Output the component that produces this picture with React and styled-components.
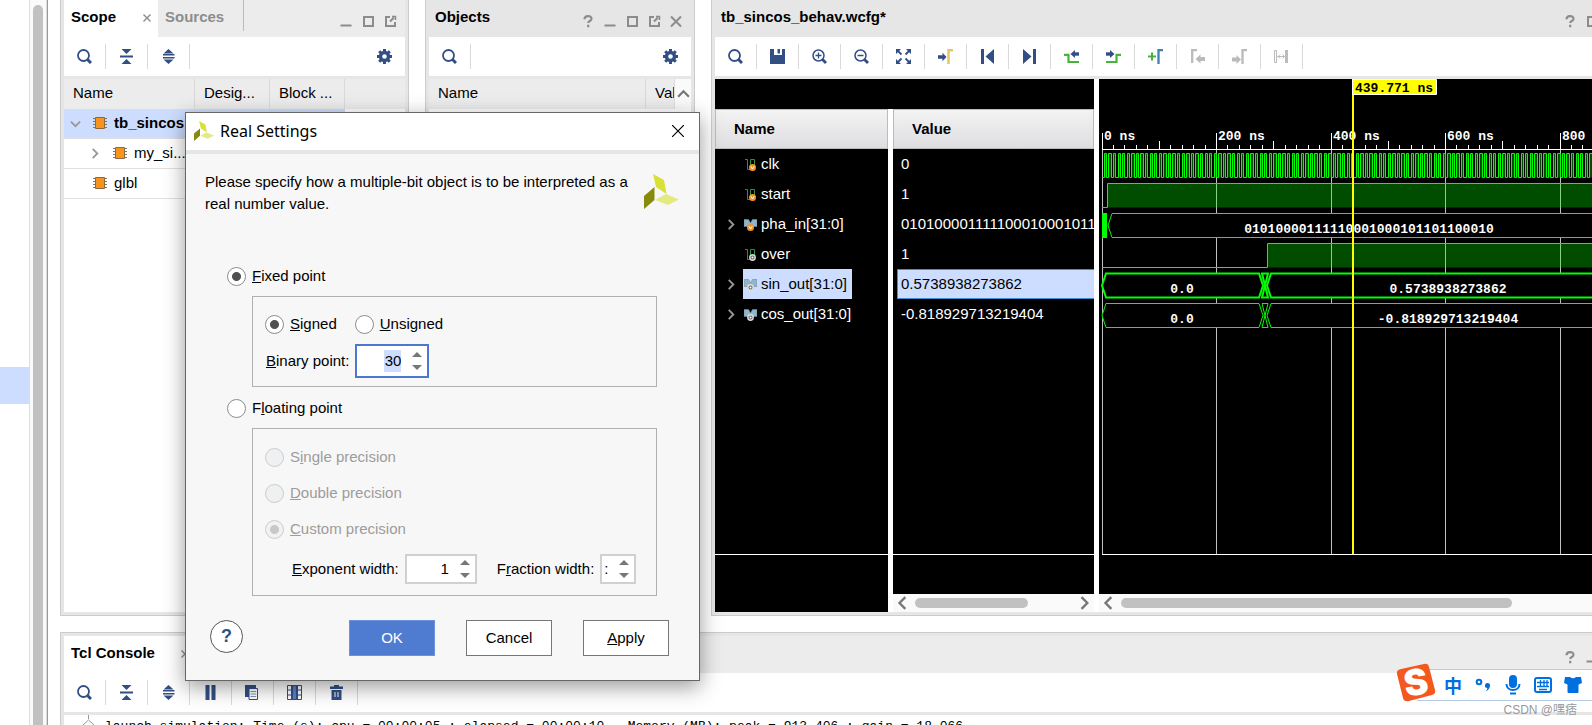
import React from "react";
import styled, { createGlobalStyle, css } from "styled-components";

const navy = "#324f85";
const grey = "#8c8c8c";
const selection = "#ccddff";
const frame = "#e6e6e6";

const GlobalStyle = createGlobalStyle`
  * { box-sizing: border-box; }
  body {
    margin: 0;
    overflow: hidden;
    background: #fff;
    color: #000;
    font: 15px/22px "Liberation Sans", Arial, sans-serif;
  }
  button, input { font: inherit; color: inherit; margin: 0; }
  button { padding: 0; border: 0; background: none; }
  svg { display: block; }
`;

/* ---------- page frame ---------- */

const Page = styled.div`
  position: relative;
  display: flex;
  height: 100vh;
  overflow: hidden;
`;

const SideStrip = styled.aside`
  flex: none;
  display: flex;
  width: 48px;
  border-right: 1px solid #999;
`;

const SideList = styled.div`
  flex: 1;
  padding-top: 367px;
`;

const SideSelected = styled.div`
  height: 37px;
  background: ${selection};
`;

const SideTrack = styled.div`
  width: 18px;
  padding: 5px 3px 0;
  border: solid #ddd;
  border-width: 0 1px;
  background: #fafafa;
`;

const SideThumb = styled.div`
  height: 100%;
  border-radius: 5px 5px 0 0;
  background: #c1c1c1;
`;

/* The window is wider than the screen, so its right edge runs off it. */
const Workspace = styled.main`
  flex: 1;
  min-width: 0;
  display: flex;
  flex-direction: column;
  gap: 16px;
  margin: 0 -63px 0 12px;
`;

const TopRow = styled.div`
  flex: 1;
  min-height: 0;
  display: flex;
  gap: 16px;
`;

const Panel = styled.section`
  display: flex;
  flex-direction: column;
  flex: ${(p) => (p.$width ? `0 0 ${p.$width}px` : "1")};
  min-width: 0;
  border: 1px solid #ccc;
  border-top: 0;
  padding: 0 3px 3px;
  background: ${frame};
`;

const ConsolePanel = styled(Panel)`
  flex: none;
  height: 93px;
  padding: 3px 3px 0;
  border-top: 1px solid #ccc;
  border-bottom: 0;
  overflow: hidden;
`;

const PanelHeader = styled.header`
  flex: none;
  display: flex;
  height: 37px;
  background: ${(p) => (p.$tabbed ? "#ececec" : frame)};
`;

const Tab = styled.div`
  display: flex;
  align-items: center;
  gap: 4px;
  height: ${(p) => (p.$active ? "37px" : "31px")};
  padding: ${(p) => (p.$active ? "0 6px 3px 7px" : "3px 0 0 7px")};
  width: ${(p) => p.$width}px;
  justify-content: space-between;
  font-weight: bold;
  color: ${(p) => (p.$active ? "#000" : grey)};
  background: ${(p) => (p.$active ? "#fff" : "transparent")};
  border-right: ${(p) => (p.$active ? "0" : "1px solid #bbb")};
`;

const PanelTitle = styled.h2`
  margin: 0;
  padding: 6px 0 0 6px;
  font-size: 15px;
  line-height: 22px;
`;

const HeaderActions = styled.div`
  display: flex;
  gap: 6px;
  margin-left: auto;
  padding: 13px 7px 0 0;
  button { width: 16px; height: 16px; }
`;

const Toolbar = styled.div`
  flex: none;
  display: flex;
  align-items: center;
  height: 39px;
  margin-bottom: 3px;
  background: #fff;
`;

const ToolButton = styled.button`
  display: grid;
  place-items: center;
  width: ${(p) => (p.$plain ? "41px" : "42px")};
  height: 25px;
  border-right: ${(p) => (p.$plain ? "0" : "1px solid #d9d9d9")};
  margin-left: ${(p) => (p.$plain ? "auto" : "0")};
`;

const PanelBody = styled.div`
  flex: 1;
  min-height: 0;
  background: #fff;
`;

/* ---------- tables ---------- */

const Table = styled.table`
  width: 100%;
  table-layout: fixed;
  border-collapse: separate;
  border-spacing: 0;
  th, td {
    height: 30px;
    padding: 0 0 1px 9px;
    overflow: hidden;
    white-space: nowrap;
    text-align: left;
    font-weight: normal;
    border-bottom: 1px solid #e0e0e0;
  }
  th { background: #ececec; border-right: 1px solid #d9d9d9; border-bottom-color: #ececec; }
  th:last-child { border-right: 0; }
`;

const Row = styled.tr`
  td { background: ${(p) => (p.$selected ? selection : "#fff")}; font-weight: ${(p) => (p.$selected ? "bold" : "normal")}; }
  td:last-child { background: #fff; }
`;

const TreeCell = styled.div`
  display: flex;
  align-items: center;
  padding-left: ${(p) => p.$level * 20}px;
`;

const TreeToggle = styled.span`
  flex: none;
  width: 23px;
  margin-left: -3px;
`;

const TreeIcon = styled.span`
  flex: none;
  margin-right: 7px;
`;

const ObjectsHead = styled.div`
  display: flex;
  table { flex: 1; }
  button { display: grid; place-items: center; width: 17px; background: #fafafa; border-left: 1px solid #ddd; }
`;

/* ---------- wave viewer ---------- */

const WaveArea = styled.div`
  flex: 1;
  min-height: 0;
  display: flex;
  gap: 5px;
  background: #fff;
`;

const SignalPane = styled.div`
  flex: none;
  display: flex;
  flex-direction: column;
`;

const SignalTop = styled.div`
  flex: none;
  height: 30px;
  background: #000;
`;

const SignalColumns = styled.div`
  flex: 1;
  min-height: 0;
  display: flex;
  gap: 5px;
`;

const Column = styled.div`
  display: flex;
  flex-direction: column;
  width: ${(p) => p.$width}px;
  background: #000;
  color: #fff;
`;

const ColumnHead = styled.div`
  flex: none;
  height: 40px;
  padding: 8px 18px 0;
  border: 1px solid #bbb;
  background: linear-gradient(#f3f3f3, #dedee2);
  color: #000;
  font-weight: bold;
`;

const SignalList = styled.ul`
  flex: none;
  height: 406px;
  margin: 0;
  padding: 0;
  list-style: none;
  border-bottom: 1px solid #fff;
`;

const SignalRow = styled.li`
  display: flex;
  height: 30px;
  padding-left: 8px;
`;

const Expander = styled.span`
  display: grid;
  place-items: center;
  width: 16px;
  margin-right: 4px;
`;

const SignalName = styled.span`
  display: flex;
  align-items: center;
  gap: 4px;
  padding: 0 5px 0 1px;
  ${(p) => p.$selected && css`background: ${selection}; color: #000;`}
`;

const ValueRow = styled.li`
  height: 30px;
  margin-left: 4px;
  padding-left: 3px;
  line-height: 28px;
  border: 1px solid ${(p) => (p.$selected ? "#3c8fd0" : "transparent")};
  border-right: 0;
  background: ${(p) => (p.$selected ? selection : "transparent")};
  color: ${(p) => (p.$selected ? "#000" : "#fff")};
  overflow: hidden;
  white-space: nowrap;
`;

const ScrollBar = styled.div`
  flex: none;
  display: flex;
  align-items: center;
  height: 18px;
  margin-top: auto;
  background: #fafafa;
  button { display: grid; place-items: center; width: 19px; }
`;

const ScrollTrack = styled.div`
  flex: 1;
  padding: 0 3px;
`;

const ScrollThumb = styled.div`
  width: ${(p) => p.$size};
  height: 10px;
  border-radius: 5px;
  background: #c1c1c1;
`;

const WavePane = styled.div`
  flex: 1;
  min-width: 0;
  display: flex;
  flex-direction: column;
  background: #000;
  > svg { width: 100%; height: 514px; }
  text { font: bold 13px "Liberation Mono", monospace; fill: #fff; white-space: pre; }
`;

/* ---------- console ---------- */

const ConsoleOutput = styled.div`
  display: flex;
  gap: 11px;
  height: 30px;
  padding: 2px 0 0 18px;
  background: #fff;
  font: 13px/20px "Liberation Mono", monospace;
  white-space: pre;
  svg { margin-top: -2px; }
`;

/* ---------- dialog ---------- */

const Dialog = styled.form`
  position: absolute;
  left: 185px;
  top: 112px;
  width: 515px;
  border: 1px solid #666;
  background: #f7f7f7;
  box-shadow: 0 6px 20px rgba(0, 0, 0, 0.4);
`;

const DialogTitle = styled.div`
  display: flex;
  align-items: center;
  gap: 6px;
  height: 41px;
  padding: 0 15px 1px 8px;
  border-bottom: 4px solid ${frame};
  background: #fff;
  font: 16px/22px "Noto Sans", sans-serif;
  button { margin-left: auto; }
`;

const DialogBody = styled.div`
  padding: 17px 20px 24px 19px;
`;

const Intro = styled.div`
  display: flex;
  justify-content: space-between;
  align-items: flex-start;
  height: 94px;
  p { margin: 0; width: 432px; }
  svg { margin-top: 3px; }
`;

const RadioLabel = styled.label`
  display: inline-flex;
  align-items: center;
  gap: 6px;
  height: 22px;
  color: ${(p) => (p.$disabled ? "#9c9c9c" : "#000")};
`;

const Radio = styled.input.attrs({ type: "radio" })`
  appearance: none;
  width: 19px;
  height: 19px;
  border: 1px solid #8c8c8c;
  border-radius: 50%;
  background: ${(p) => (p.$on ? "radial-gradient(circle, #505050 4px, #fff 5px)" : "#fff")};
  &:disabled {
    border-color: #ccc;
    background: ${(p) => (p.$on ? "radial-gradient(circle, #c8c8c8 4px, #f0f1f2 5px)" : "#eff0f2")};
  }
`;

const ModeRow = styled.div`
  padding: 0 0 0 22px;
  display: flex;
`;

const Group = styled.fieldset`
  display: flex;
  flex-direction: column;
  align-items: flex-start;
  gap: ${(p) => p.$gap}px;
  margin: 9px 22px 10px 47px;
  padding: ${(p) => p.$pad};
  border: 1px solid #b0b0b0;
`;

const FieldRow = styled.div`
  flex: none;
  display: flex;
  align-items: center;
  gap: ${(p) => p.$gap || 6}px;
  padding-left: ${(p) => p.$indent || 0}px;
  white-space: nowrap;
`;

const Spinner = styled.span`
  flex: none;
  display: flex;
  align-items: center;
  justify-content: flex-end;
  width: ${(p) => p.$width}px;
  height: ${(p) => (p.$focused ? "34px" : "30px")};
  padding-right: 5px;
  border: 2px solid ${(p) => (p.$focused ? "#4a79cf" : "#d0d0d0")};
  background: #fff;
  input {
    width: ${(p) => p.$digits}px;
    height: 22px;
    padding: 0;
    border: 0;
    background: ${(p) => (p.$focused ? selection : "#fff")};
    text-align: right;
  }
`;

const SpinnerArrows = styled.span`
  display: flex;
  flex-direction: column;
  gap: 8px;
  margin-left: 11px;
`;

const ButtonRow = styled.div`
  display: flex;
  align-items: center;
  gap: 31px;
  margin-top: 24px;
  padding-right: 10px;
`;

const HelpButton = styled.button`
  width: 33px;
  height: 33px;
  margin: -4px auto 0 5px;
  border: 1px solid #555;
  border-radius: 50%;
  background: #fff;
  color: ${navy};
  font-size: 18px;
  font-weight: bold;
`;

const DialogButton = styled.button`
  width: 86px;
  height: 36px;
  border: 1px solid ${(p) => (p.$primary ? "#6a92dd" : "#777")};
  background: ${(p) => (p.$primary ? "#4f7bd0" : "#fff")};
  color: ${(p) => (p.$primary ? "#fff" : "#000")};
`;

/* ---------- input method bar ---------- */

const ImeBar = styled.div`
  position: absolute;
  right: 0;
  bottom: 24px;
  display: flex;
  align-items: center;
  width: 175px;
  height: 32px;
  padding-left: 21px;
  border: solid #b5cbe3;
  border-width: 1px 0;
  background: #fff;
  color: #0070e0;
  > svg:first-child { position: absolute; left: -21px; top: -7px; }
  button { display: grid; place-items: center; width: 30px; height: 30px; font: bold 18px/24px "Noto Sans CJK SC", sans-serif; }
`;

const Watermark = styled.div`
  position: absolute;
  right: 15px;
  bottom: 5px;
  color: #999;
  font: 12px/20px "Liberation Sans", "Noto Sans CJK SC", sans-serif;
`;

/* ---------- icons ---------- */

const I = ({ children, size = 15, box = 15, ...rest }) => (
  <svg width={size} height={size} viewBox={`0 0 ${box} ${box}`} fill="none" stroke={navy} aria-hidden="true" {...rest}>
    {children}
  </svg>
);

const fillOnly = { fill: navy, stroke: "none" };

const icons = {
  search: <I><circle cx="6.5" cy="6.5" r="5.5" strokeWidth="1.8" /><path d="M10.5 10.5L14 14" strokeWidth="3" /></I>,
  collapse: <I {...fillOnly}><path d="M2.500 0h10L7.500 5zM1 6.500h13v2H1zM2.500 15h10L7.500 10z" /></I>,
  expand: <I {...fillOnly}><path d="M7.500 0l5 4.500h-10zM2 5h11.500v1.500H2zM2 8h11.500v1.500H2zM2.500 10.500h10l-5 4.500z" /></I>,
  gear: (
    <I>
      <circle cx="7.500" cy="7.500" r="4" strokeWidth="3.400" />
      <path d="M7.500 0v2.500M7.500 12.500V15M0 7.500h2.500M12.500 7.500H15M2.200 2.200l1.800 1.800M11 11l1.800 1.800M12.800 2.200L11 4M4 11l-1.800 1.800" strokeWidth="3" />
    </I>
  ),
  save: <I {...fillOnly}><path d="M0 0h15v15H0z" /><path d="M4 0h8v6H4z" fill="#fff" /><path d="M7.500 0h2.500v4.500H7.500z" /></I>,
  zoomIn: <I><circle cx="6.500" cy="6.500" r="5.500" strokeWidth="1.500" /><path d="M3.500 6.500h6M6.500 3.500v6" strokeWidth="1.300" /><path d="M10.500 10.500L14 14" strokeWidth="2.800" /></I>,
  zoomOut: <I><circle cx="6.500" cy="6.500" r="5.500" strokeWidth="1.500" /><path d="M3.500 6.500h6" strokeWidth="1.500" /><path d="M10.500 10.500L14 14" strokeWidth="2.800" /></I>,
  fit: (
    <I>
      <path d="M0 0h5L0 5zM15 0v5l-5-5zM0 15v-5l5 5zM15 15h-5l5-5z" fill={navy} stroke="none" />
      <path d="M2 2l3.500 3.500M13 2L9.500 5.500M2 13l3.500-3.500M13 13L9.500 9.500" strokeWidth="1.800" />
    </I>
  ),
  gotoCursor: <I><path d="M0 8h5" strokeWidth="3.500" /><path d="M4.500 3.800L8.500 8l-4 4.200z" fill={navy} stroke="none" /><path d="M10.500 15V1.200H15" stroke="#e3c766" strokeWidth="2.500" /></I>,
  first: <I {...fillOnly}><path d="M1 0h3v15H1zM14 0v15L5.500 7.500z" /></I>,
  last: <I {...fillOnly}><path d="M11 0h3v15h-3zM1 0v15l8.500-7.500z" /></I>,
  prevEdge: <I><path d="M0 5.800h4.500V13H15" stroke="#48b23c" strokeWidth="2.200" /><path d="M10 5h5" strokeWidth="3.400" /><path d="M11 1v8L6.500 5z" fill={navy} stroke="none" /></I>,
  nextEdge: <I><path d="M0 13h10.500V5.800H15" stroke="#48b23c" strokeWidth="2.200" /><path d="M0 5h5" strokeWidth="3.400" /><path d="M4 1v8l4.500-4z" fill={navy} stroke="none" /></I>,
  addMarker: <I><path d="M0 7.500h8M4 3.500v8" stroke="#48b23c" strokeWidth="2" /><path d="M10.500 15V1.200H15" stroke="#3b82b5" strokeWidth="2.300" /></I>,
  prevMarker: <I stroke="#bbb"><path d="M2.200 14V1.200H7" strokeWidth="2.300" /><path d="M10 10h5" strokeWidth="4" /><path d="M10.500 5.500v9L5.500 10z" fill="#bbb" stroke="none" /></I>,
  nextMarker: <I stroke="#bbb"><path d="M10.500 15V1.200H15" strokeWidth="2.300" /><path d="M0 10.500h5" strokeWidth="4" /><path d="M4.500 6v9l4.500-4.500z" fill="#bbb" stroke="none" /></I>,
  swapMarker: <I stroke="#bbb"><path d="M.5 1.500h2v12h-2z" /><path d="M12.500 1v13" strokeWidth="3" /><path d="M3.500 7.500h7M6 5.500L4 7.500l2 2M8.500 5.500l2 2-2 2" /></I>,
  pause: <I {...fillOnly}><path d="M2.500 0h4v15h-4zM8.500 0h4v15h-4z" /></I>,
  copy: <I><path d="M0 0h11v3H4v9H0z" fill={navy} stroke="none" /><path d="M4 3.500h8.500v11H4z" fill="#fff" /><path d="M5.500 6.500H11M5.500 9H11M5.500 11.500H11" stroke="#7d93bd" /></I>,
  columns: <I><path d="M.5.500h14v14H.5zM.5 5h14M.5 10h14" /><path d="M5 0h5v15H5z" fill="#5f7fc0" strokeWidth="2" /></I>,
  trash: <I {...fillOnly}><path d="M5 0h5v1.500h4V4H1V1.500h4zM2.500 5h10v10h-10z" /><path d="M5.500 7h1v5h-1zM8.500 7h1v5h-1z" fill="#fff" /></I>,
};

const HI = (props) => <I size={16} box={16} stroke={grey} {...props} />;
const headerIcons = {
  Help: <HI><path d="M4.500 6.200c0-4 7-4.200 7-.5 0 2.300-3.300 2.300-3.300 4.300M8.200 11.800v2.400" strokeWidth="2.200" /></HI>,
  Minimize: <HI><path d="M2.500 12.500h11" strokeWidth="2" /></HI>,
  Maximize: <HI><path d="M4 4h9v9H4z" strokeWidth="2" /></HI>,
  Float: <HI><path d="M8 4H4v9h9V9M8 8.500L12 4.500" strokeWidth="2" /><path d="M10 3.500h3.500V7" strokeWidth="1.500" /></HI>,
  Close: <HI><path d="M3 3.500l10 10M13 3.500l-10 10" strokeWidth="2" /></HI>,
};

const Chevron = ({ dir = "right", color = "#999", size = 11 }) => {
  const d = { right: "M3 1l5 5-5 5", left: "M8 1L3 6l5 5", up: "M1 8l5-5 5 5", down: "M1 4l5 5 5-5" }[dir];
  return <I size={size} box={12} stroke={color} strokeWidth="2"><path d={d} /></I>;
};

const Chip = () => (
  <I size={14} box={14}>
    <path d="M0 2.500h14M0 5.500h14M0 8.500h14M0 11.500h14" stroke="#777" />
    <path d="M2.500 1.500h9v11h-9z" fill="#f7941d" stroke="#8a6a3c" />
  </I>
);

const PortBadge = ({ cx, output }) =>
  output ? (
    <>
      <circle cx={cx} cy="9.500" r="2.700" fill="#666" stroke="#ddd" strokeWidth="1.400" />
      <circle cx={cx} cy="9.500" r="1" fill="#fff" stroke="none" />
    </>
  ) : (
    <>
      <circle cx={cx} cy="9.500" r="3.500" fill="#f7941d" stroke="none" />
      <path d={`M${cx - 1.6} 8.200l1.600 2.800 1.600-2.800`} stroke="#fff" />
    </>
  );

const ScalarIcon = ({ output }) => (
  <I size={13} box={13}>
    <path d="M1 1.500h2.500v10h3v-10h4v6" stroke="#2f8f46" />
    <PortBadge cx={8.5} output={output} />
  </I>
);

const BusIcon = ({ output }) => (
  <I size={13} box={13}>
    <path d="M0 1.500h4.500l2 3.500 2-3.500H13v7H0z" fill="#8fb6cc" stroke="#789" strokeWidth=".6" />
    <PortBadge cx={6.5} output={output} />
  </I>
);

const Pinwheel = ({ size }) => (
  <I size={size} box={35} stroke="none">
    <path d="M9 0l11 6 2.500 14L12 13z" fill="#d7e138" />
    <path d="M0 22l10.500-9v13L0 35z" fill="#878a0c" />
    <path d="M11 26l11-6 13 5.500L24 31z" fill="#e4ea82" />
  </I>
);

/* ---------- shared pieces ---------- */

const Actions = ({ names }) => (
  <HeaderActions>
    {names.map((n) => (
      <button key={n} type="button" aria-label={n}>{headerIcons[n]}</button>
    ))}
  </HeaderActions>
);

const Tools = ({ names, gear }) => (
  <Toolbar>
    {names.map((n) => (
      <ToolButton key={n} type="button" aria-label={n}>{icons[n]}</ToolButton>
    ))}
    {gear && <ToolButton $plain type="button" aria-label="settings">{icons.gear}</ToolButton>}
  </Toolbar>
);

const CloseTab = () => (
  <button type="button" aria-label="Close tab">
    <I size={10} box={10} stroke={grey} strokeWidth="1.400"><path d="M1.500 2.500l7 7M8.500 2.500l-7 7" /></I>
  </button>
);

const HScroll = ({ size }) => (
  <ScrollBar>
    <button type="button" aria-label="Scroll left"><Chevron dir="left" color="#777" size={14} /></button>
    <ScrollTrack><ScrollThumb $size={size} /></ScrollTrack>
    <button type="button" aria-label="Scroll right"><Chevron color="#777" size={14} /></button>
  </ScrollBar>
);

const TreeItem = ({ level = 0, dir, children }) => (
  <TreeCell $level={level}>
    <TreeToggle>{dir && <Chevron dir={dir} />}</TreeToggle>
    <TreeIcon><Chip /></TreeIcon>
    {children}
  </TreeCell>
);

/* ---------- waveform ---------- */

const signals = [
  { name: "clk", value: "0" },
  { name: "start", value: "1" },
  { name: "pha_in[31:0]", value: "01010000111110001000101101100010", bus: true },
  { name: "over", value: "1", output: true },
  { name: "sin_out[31:0]", value: "0.5738938273862", bus: true, output: true, selected: true },
  { name: "cos_out[31:0]", value: "-0.818929713219404", bus: true, output: true },
];

const END = 560;
const timeX = (ns) => Math.floor(3 + ns * 0.5725);
const rowTop = (i) => 74.5 + i * 30;
const rowBottom = (i) => rowTop(i) + 24;

const BusShape = ({ row, from, to, thick }) => {
  const t = rowTop(row);
  const b = rowBottom(row);
  const m = (t + b) / 2;
  const s = Math.min(4, (to - from) / 2 - 1);
  return (
    <path
      d={`M${from} ${m}L${from + s} ${t}H${to - s}L${to} ${m}L${to - s} ${b}H${from + s}z`}
      fill="#000"
      stroke="#0f0"
      strokeWidth={thick ? 2 : 1}
    />
  );
};

const Level = ({ row, rise }) => (
  <>
    <path d={`M${rise} ${rowTop(row)}H${END}V${rowBottom(row)}H${rise}z`} fill="#0f0" fillOpacity=".3" />
    <path d={`M3 ${rowBottom(row)}H${rise + 0.5}V${rowTop(row)}H${END}`} stroke="#0f0" fill="none" />
  </>
);

const clockEdges = Array.from({ length: 122 }, (_, k) => [timeX(8 * k + 4) + 0.5, timeX(8 * k + 8) + 0.5]);

const Waveform = () => (
  <svg role="img" aria-label="Waveform">
    <g stroke="#c0c0c0">
      {[0, 200, 400, 600, 800].map((t) => <path key={t} d={`M${timeX(t) + 0.5} 54V475`} />)}
    </g>
    <g stroke="#fff">
      <path d={`M3 70.500H${END}M3 475.500H${END}`} />
      {Array.from({ length: 47 }, (_, k) => (
        <path key={k} d={`M${timeX(k * 20) + 0.5} ${k % 10 === 0 ? 54 : k % 5 === 0 ? 62 : 66}V70`} />
      ))}
    </g>
    <path
      d={`M3 ${rowBottom(0)}` + clockEdges.map(([u, d]) => `H${u}V${rowTop(0)}H${d}V${rowBottom(0)}`).join("")}
      stroke="#0f0"
      fill="#0f0"
      fillOpacity=".3"
    />
    <Level row={1} rise={8} />
    <BusShape row={2} from={9} to={END + 20} />
    <path d={`M3 ${rowTop(2) - 0.5}h5v25h-5z`} fill="#0f0" />
    <Level row={3} rise={168} />
    {[4, 5].map((r) => (
      <g key={r}>
        <BusShape row={r} from={3} to={164} thick={r === 4} />
        <BusShape row={r} from={168} to={END + 20} thick={r === 4} />
        <path
          d={`M163 ${rowTop(r)}h6l-6 24h6z`}
          stroke="#0f0"
          fill="none"
          strokeWidth={r === 4 ? 2 : 1}
        />
      </g>
    ))}
    <g>
      <text x="5" y="61">0 ns</text>
      <text x="119" y="61">200 ns</text>
      <text x="234" y="61">400 ns</text>
      <text x="348" y="61">600 ns</text>
      <text x="463" y="61">800</text>
    </g>
    <g textAnchor="middle">
      <text x="270" y="154">01010000111110001000101101100010</text>
      <text x="83" y="214">0.0</text>
      <text x="349" y="214">0.5738938273862</text>
      <text x="83" y="244">0.0</text>
      <text x="349" y="244">-0.818929713219404</text>
    </g>
    <path d="M253 0h2v475h-2z" fill="#ff0" />
    <path d="M253.500.500h84v15h-84z" fill="#ff0" stroke="#fff" />
    <text x="256" y="13" style={{ fill: "#000" }}>439.771 ns</text>
  </svg>
);

/* ---------- dialog pieces ---------- */

const Option = ({ name, label, mnemonic = 0, on, disabled }) => (
  <RadioLabel $disabled={disabled}>
    <Radio name={name} defaultChecked={on} $on={on} disabled={disabled} />
    <span>{label.slice(0, mnemonic)}<u>{label[mnemonic]}</u>{label.slice(mnemonic + 1)}</span>
  </RadioLabel>
);

const SpinField = ({ id, value, width, digits, focused }) => (
  <Spinner $width={width} $digits={digits} $focused={focused}>
    <input id={id} defaultValue={value} />
    <SpinnerArrows>
      <button type="button" aria-label="Increase"><svg width="10" height="5"><path d="M0 5l5-5 5 5z" fill="#777" /></svg></button>
      <button type="button" aria-label="Decrease"><svg width="10" height="5"><path d="M0 0h10L5 5z" fill="#777" /></svg></button>
    </SpinnerArrows>
  </Spinner>
);

const RealSettings = () => (
  <Dialog role="dialog" aria-label="Real Settings" onSubmit={(e) => e.preventDefault()}>
    <DialogTitle>
      <Pinwheel size={20} />
      Real Settings
      <button type="button" aria-label="Close">
        <I size={12} box={12} stroke="#000" strokeWidth="1.200"><path d="M0 0l12 12M12 0L0 12" /></I>
      </button>
    </DialogTitle>
    <DialogBody>
      <Intro>
        <p>Please specify how a multiple-bit object is to be interpreted as a real number value.</p>
        <Pinwheel size={35} />
      </Intro>
      <ModeRow><Option name="mode" label="Fixed point" on /></ModeRow>
      <Group $gap={9} $pad="16px 12px 8px">
        <FieldRow $gap={18}>
          <Option name="sign" label="Signed" on />
          <Option name="sign" label="Unsigned" />
        </FieldRow>
        <FieldRow $indent={1}>
          <label htmlFor="binary-point"><u>B</u>inary point:</label>
          <SpinField id="binary-point" value="30" width={74} digits={17} focused />
        </FieldRow>
      </Group>
      <ModeRow><Option name="mode" label="Floating point" mnemonic={1} /></ModeRow>
      <Group $gap={14} $pad="17px 12px 11px">
        <Option name="precision" label="Single precision" mnemonic={1} disabled />
        <Option name="precision" label="Double precision" disabled />
        <Option name="precision" label="Custom precision" on disabled />
        <FieldRow $indent={27}>
          <label htmlFor="exponent"><u>E</u>xponent width:</label>
          <SpinField id="exponent" value="1" width={72} digits={30} />
          <FieldRow $indent={14}>
            <label htmlFor="fraction">F<u>r</u>action width:</label>
            <SpinField id="fraction" value=":" width={36} digits={5} />
          </FieldRow>
        </FieldRow>
      </Group>
      <ButtonRow>
        <HelpButton type="button" aria-label="Help">?</HelpButton>
        <DialogButton $primary type="submit">OK</DialogButton>
        <DialogButton type="button">Cancel</DialogButton>
        <DialogButton type="button"><u>A</u>pply</DialogButton>
      </ButtonRow>
    </DialogBody>
  </Dialog>
);

const Ime = () => (
  <ImeBar>
    <svg width="40" height="40" viewBox="0 0 40 40" aria-hidden="true">
      <path d="M5 6l23-5q4-1 5 3l6 23q1 4-3 5L13 38q-5 1-6-3L1 11q-1-4 4-5z" fill="#f4581e" />
      <text x="20" y="32" textAnchor="middle" transform="rotate(-10 20 20)" fill="#fff" fontFamily="Inter, sans-serif" fontWeight="900" fontSize="36">S</text>
    </svg>
    <button type="button">中</button>
    <button type="button" aria-label="Punctuation">
      <svg width="16" height="14"><circle cx="4" cy="4" r="2.300" fill="none" stroke="#0070e0" strokeWidth="2" /><path d="M10 7a2.500 2.500 0 1 1 5 1q-.5 3.500-4.500 5.500 2-2 1.800-3.500A2.500 2.500 0 0 1 10 7z" fill="#0070e0" /></svg>
    </button>
    <button type="button" aria-label="Voice">
      <svg width="16" height="20" fill="none" stroke="#0070e0" strokeWidth="2"><rect x="5" y="1" width="6" height="11" rx="3" fill="#0070e0" /><path d="M1.500 9c0 8 13 8 13 0M5 18.500h6" /></svg>
    </button>
    <button type="button" aria-label="Keyboard">
      <svg width="18" height="16" fill="none" stroke="#0070e0"><rect x="1" y="1" width="16" height="14" rx="2" strokeWidth="2" /><path d="M3 5.500h12M3 9.500h12M6.500 3v6M10 3v6M13 3v6M5 12.500h8" strokeWidth="1.300" /></svg>
    </button>
    <button type="button" aria-label="Skin">
      <svg width="18" height="18"><path d="M1 1h5q3 2.500 6 0h5l1 6-3.500 1.500V16q0 1-1 1h-9q-1 0-1-1V8.500L0 7z" fill="#0070e0" /></svg>
    </button>
  </ImeBar>
);

export default function App() {
  return (
    <Page>
      <GlobalStyle />
      <SideStrip>
        <SideList><SideSelected /></SideList>
        <SideTrack><SideThumb /></SideTrack>
      </SideStrip>

      <Workspace>
        <TopRow>
          <Panel $width={349}>
            <PanelHeader $tabbed>
              <Tab $active $width={94}>Scope<CloseTab /></Tab>
              <Tab $width={86}>Sources</Tab>
              <Actions names={["Minimize", "Maximize", "Float"]} />
            </PanelHeader>
            <Tools names={["search", "collapse", "expand"]} gear />
            <PanelBody>
              <Table>
                <colgroup><col width="131" /><col width="75" /><col width="75" /><col /></colgroup>
                <thead>
                  <tr><th>Name</th><th>Desig...</th><th>Block ...</th><th /></tr>
                </thead>
                <tbody>
                  <Row $selected>
                    <td><TreeItem dir="down">tb_sincos</TreeItem></td>
                    <td /><td /><td />
                  </Row>
                  <Row>
                    <td><TreeItem level={1} dir="right">my_si...</TreeItem></td>
                    <td /><td /><td />
                  </Row>
                  <Row>
                    <td><TreeItem>glbl</TreeItem></td>
                    <td /><td /><td />
                  </Row>
                </tbody>
              </Table>
            </PanelBody>
          </Panel>

          <Panel $width={270}>
            <PanelHeader>
              <PanelTitle>Objects</PanelTitle>
              <Actions names={["Help", "Minimize", "Maximize", "Float", "Close"]} />
            </PanelHeader>
            <Tools names={["search"]} gear />
            <PanelBody>
              <ObjectsHead>
                <Table>
                  <colgroup><col /><col width="28" /></colgroup>
                  <thead><tr><th>Name</th><th>Val</th></tr></thead>
                </Table>
                <button type="button" aria-label="Scroll up"><Chevron dir="up" color="#777" size={13} /></button>
              </ObjectsHead>
            </PanelBody>
          </Panel>

          <Panel>
            <PanelHeader>
              <PanelTitle>tb_sincos_behav.wcfg*</PanelTitle>
              <Actions names={["Help", "Maximize", "Float", "Close"]} />
            </PanelHeader>
            <Tools
              names={["search", "save", "zoomIn", "zoomOut", "fit", "gotoCursor", "first", "last", "prevEdge", "nextEdge", "addMarker", "prevMarker", "nextMarker", "swapMarker"]}
            />
            <WaveArea>
              <SignalPane>
                <SignalTop />
                <SignalColumns>
                  <Column $width={173}>
                    <ColumnHead>Name</ColumnHead>
                    <SignalList>
                      {signals.map((s) => (
                        <SignalRow key={s.name}>
                          <Expander>{s.bus && <Chevron />}</Expander>
                          <SignalName $selected={s.selected}>
                            {s.bus ? <BusIcon output={s.output} /> : <ScalarIcon output={s.output} />}
                            {s.name}
                          </SignalName>
                        </SignalRow>
                      ))}
                    </SignalList>
                  </Column>
                  <Column $width={201}>
                    <ColumnHead>Value</ColumnHead>
                    <SignalList>
                      {signals.map((s) => <ValueRow key={s.name} $selected={s.selected}>{s.value}</ValueRow>)}
                    </SignalList>
                    <HScroll size="72%" />
                  </Column>
                </SignalColumns>
              </SignalPane>
              <WavePane>
                <Waveform />
                <HScroll size="77%" />
              </WavePane>
            </WaveArea>
          </Panel>
        </TopRow>

        <ConsolePanel>
          <PanelHeader $tabbed>
            <Tab $active $width={132}>Tcl Console<CloseTab /></Tab>
            <Actions names={["Help", "Minimize", "Maximize", "Float"]} />
          </PanelHeader>
          <Tools names={["search", "collapse", "expand", "pause", "copy", "columns", "trash"]} />
          <ConsoleOutput>
            <svg width="12" height="20" fill="none" stroke="#999"><path d="M6.500 0v4M1 12v-2l5.500-5 5.500 5v2" /></svg>
            launch_simulation: Time (s): cpu = 00:00:05 ; elapsed = 00:00:10 . Memory (MB): peak = 913.406 ; gain = 18.066
          </ConsoleOutput>
        </ConsolePanel>
      </Workspace>

      <RealSettings />
      <Ime />
      <Watermark>CSDN @嘿痞</Watermark>
    </Page>
  );
}
